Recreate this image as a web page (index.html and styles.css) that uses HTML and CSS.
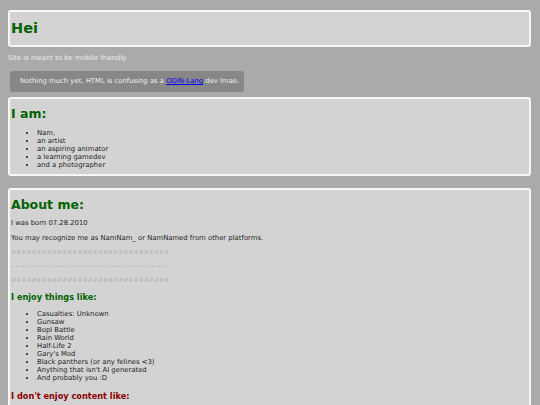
FILE: index.html
```html
<!DOCTYPE html>
<html lang="en">
<head>
  <meta charset="UTF-8">
  <meta name="viewport" content="width=device-width, initial-scale=1.0">
  <title>Hei</title>
  <link rel="stylesheet" href="styles.css">
</head>
<body>
  <!-- Header -->
  <div class="card title-card">
    <h1>Hei</h1>
  </div>
  <p class="note">Site is meant to be mobile friendly.</p>
  <div class="notice">Nothing much yet, HTML is confusing as a <a href="#">ODIN-Lang</a> dev lmao.</div>

  <!-- Who I am -->
  <div class="card">
    <h2>I am:</h2>
    <ul>
      <li>Nam,</li>
      <li>an artist</li>
      <li>an aspiring animator</li>
      <li>a learning gamedev</li>
      <li>and a photographer</li>
    </ul>
  </div>

  <!-- About -->
  <div class="card about">
    <h2>About me:</h2>
    <p>I was born 07.28.2010</p>
    <p>You may recognize me as NamNam_ or NamNamed from other platforms.</p>
    <p class="hashes">###############################</p>
    <hr>
    <p class="hashes after">###############################</p>
    <h3 class="like">I enjoy things like:</h3>
    <ul>
      <li>Casualties: Unknown</li>
      <li>Gunsaw</li>
      <li>Bopl Battle</li>
      <li>Rain World</li>
      <li>Half-Life 2</li>
      <li>Gary's Mod</li>
      <li>Black panthers (or any felines &lt;3)</li>
      <li>Anything that isn't AI generated</li>
      <li>And probably you :D</li>
    </ul>
    <h3 class="dislike">I don't enjoy content like:</h3>
    <ul>
      <li>AI generated "art"</li>
      <li>Low effort content</li>
    </ul>
  </div>
</body>
</html>
```

FILE: styles.css
```css
/* General Styles */
body {
  margin: 10px 9px 0 8px;
  background-color: #aaaaaa;
  font-family: 'DejaVu Sans', Verdana, sans-serif;
  font-size: 6.85px;
  line-height: 8px;
  color: #1e1e1e;
}

/* Cards */
.card {
  background-color: #d3d3d3;
  border: 2px solid #f7f7f7;
  border-radius: 3px;
  padding: 0 1px 5px;
  margin-bottom: 12px;
}

.title-card {
  padding: 0 1px;
  margin-bottom: 0;
}

.title-card h1 {
  margin: 0;
  font-size: 14.5px;
  line-height: 33px;
  color: #006400;
}

/* Small text under the header */
.note {
  margin: 7px 0 0;
  color: #eeeeee;
}

.notice {
  width: fit-content;
  margin: 9px 0 5px 2px;
  padding: 0 5px 0 10px;
  line-height: 21px;
  background-color: #878787;
  border-radius: 3px;
  color: #eeeeee;
}

.notice a {
  color: #0000ee;
}

/* Headings */
h2 {
  margin: 8px 0 0;
  font-size: 12.5px;
  line-height: 14px;
  color: #006400;
}

h3 {
  margin: 7px 0 0;
  font-size: 8.2px;
  line-height: 12px;
}

.like {
  color: #006400;
}

.dislike {
  margin-top: 8px;
  color: #8b0000;
}

/* Text */
p {
  margin: 7px 0 0;
}

ul {
  margin: 8px 0 0;
  padding-left: 26px;
}

.about ul {
  margin-top: 7px;
}

.hashes {
  margin-top: 6px;
  font-size: 6.1px;
  color: #b6b6b6;
  font-style: italic;
}

.hashes.after {
  margin-top: 9px;
}

hr {
  width: 159px;
  margin: 10px 0 0;
  border: 0;
  border-top: 1px dashed #bdbdbd;
}
```
